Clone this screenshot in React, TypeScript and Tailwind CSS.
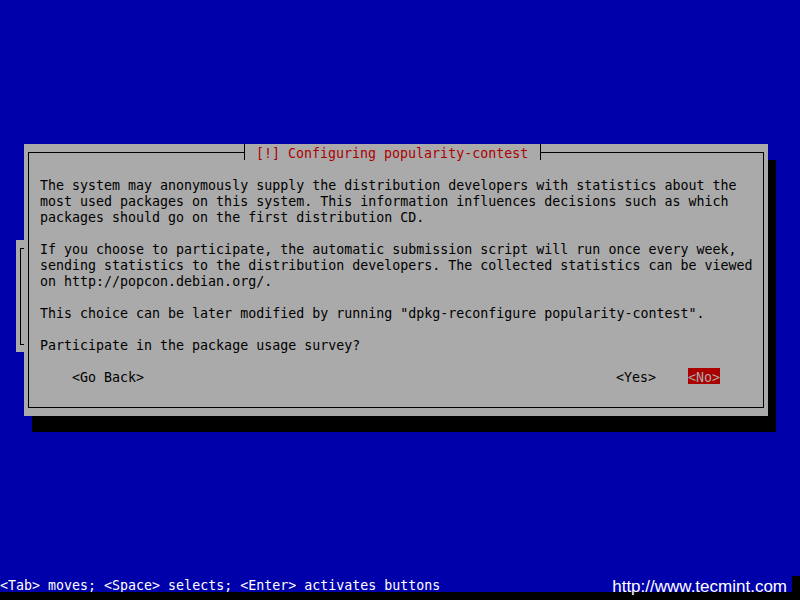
const mono = { fontFamily: '"DejaVu Sans Mono", "Liberation Mono", monospace' };

const bodyText = [
  "The system may anonymously supply the distribution developers with statistics about the",
  "most used packages on this system. This information influences decisions such as which",
  "packages should go on the first distribution CD.",
  "",
  "If you choose to participate, the automatic submission script will run once every week,",
  "sending statistics to the distribution developers. The collected statistics can be viewed",
  "on http://popcon.debian.org/.",
  "",
  'This choice can be later modified by running "dpkg-reconfigure popularity-contest".',
  "",
  "Participate in the package usage survey?",
];

const App = () => {
  return (
    <div
      className="relative w-[800px] h-[600px] bg-[#0000aa] flex flex-col overflow-hidden text-[13.3px] leading-[16px]"
      style={mono}
    >
      {/* window underneath, mostly hidden */}
      <div className="absolute left-[16px] top-[240px] w-[120px] h-[112px] bg-[#aaaaaa] pl-[4px] py-[8px]">
        <div className="w-[40px] h-[97px] border-l border-t border-b border-black" />
      </div>

      {/* dialog */}
      <div className="relative z-10 ml-[24px] mt-[144px] w-[744px] h-[272px] bg-[#aaaaaa] shadow-[8px_16px_0_0_#000] text-black">
        <div className="absolute inset-x-[4px] inset-y-[8px] border border-black" />
        <div className="absolute left-[220px] top-0 h-[16px] flex bg-[#aaaaaa]">
          <span className="w-px bg-black" />
          <span className="pt-[2px] pl-[11px] pr-[12px] text-[#aa0000] whitespace-pre">
            [!] Configuring popularity-contest
          </span>
          <span className="w-px bg-black" />
        </div>

        <div className="relative flex flex-col pt-[34px]">
          <div className="pl-[16px] whitespace-pre">
            {bodyText.map((line, i) => (
              <div key={i} className="h-[16px]">
                {line}
              </div>
            ))}
          </div>

          <div className="mt-[14px] px-[48px] flex items-start h-[16px]">
            <span className="pt-[2px]">&lt;Go Back&gt;</span>
            <span className="ml-auto pt-[2px]">&lt;Yes&gt;</span>
            <span className="ml-[32px] h-[16px] pt-[2px] bg-[#aa0000] text-[#aaaaaa]">
              &lt;No&gt;
            </span>
          </div>
        </div>
      </div>

      {/* status line */}
      <div className="mt-auto h-[16px] flex">
        <div className="flex-1 pt-[2px] text-white whitespace-pre">
          &lt;Tab&gt; moves; &lt;Space&gt; selects; &lt;Enter&gt; activates buttons
        </div>
        <div className="w-[8px] bg-black" />
      </div>
      <div className="h-[8px] bg-black" />

      {/* watermark */}
      <div
        className="absolute right-[13px] bottom-[5px] text-[17px] leading-[17px] text-white"
        style={{ fontFamily: '"Liberation Sans", Arial, sans-serif' }}
      >
        http://www.tecmint.com
      </div>
    </div>
  );
};

export default App;
